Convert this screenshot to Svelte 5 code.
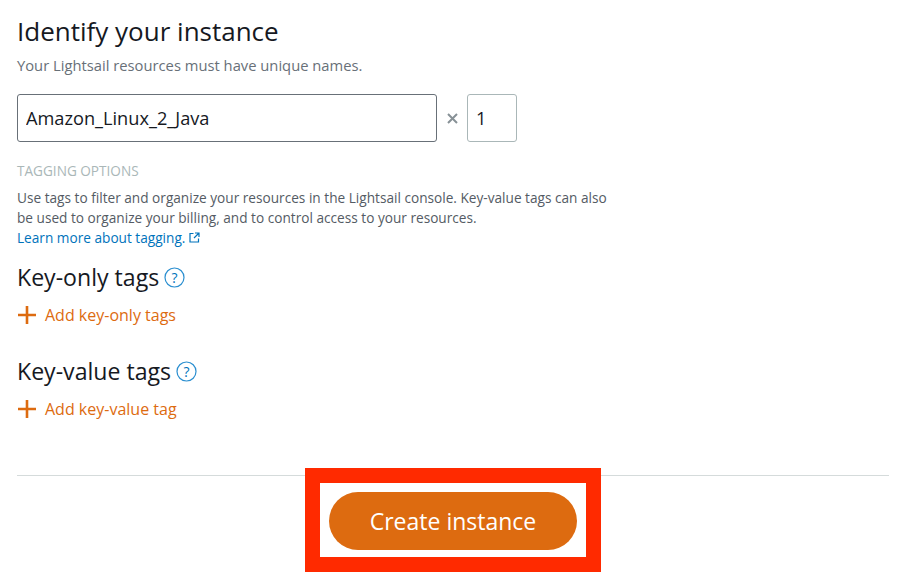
<script>
  let name = $state('Amazon_Linux_2_Java')
  let count = $state('1')
</script>

<main>
  <h2 class="title">Identify your instance</h2>
  <p class="sub">Your Lightsail resources must have unique names.</p>

  <div class="name-row">
    <input class="name" bind:value={name} />
    <span class="times">
      <svg width="11" height="11" viewBox="0 0 11 11" stroke="#879196" stroke-width="2"><path d="M1 1l9 9M10 1l-9 9" /></svg>
    </span>
    <input class="count" bind:value={count} />
  </div>

  <div class="label">TAGGING OPTIONS</div>
  <p class="desc">
    Use tags to filter and organize your resources in the Lightsail console. Key-value tags can also<br />
    be used to organize your billing, and to control access to your resources.<br />
    <a href="#tags">Learn more about tagging.
      <svg width="11" height="11" viewBox="0 0 11 11" fill="none" stroke="#0073bb" stroke-width="1.2">
        <path d="M4.5 1.5H1v8.5h8.5V6.5" />
        <path d="M6 1h4v4M10 1 5 6" />
      </svg>
    </a>
  </p>

  <section class="tags first">
    <h3>Key-only tags
      <svg class="help" width="21" height="21" viewBox="0 0 21 21">
        <circle cx="10.5" cy="10.5" r="9.5" fill="none" stroke="#2b8fd0" stroke-width="1.2" />
        <text x="10.5" y="15.5" text-anchor="middle" font-size="14" fill="#0073bb">?</text>
      </svg>
    </h3>
    <button class="add">
      <svg width="18" height="18" viewBox="0 0 18 18" stroke="#dd6b10" stroke-width="2.6"><path d="M9 0v18M0 9h18" /></svg>
      Add key-only tags
    </button>
  </section>

  <section class="tags">
    <h3>Key-value tags
      <svg class="help" width="21" height="21" viewBox="0 0 21 21">
        <circle cx="10.5" cy="10.5" r="9.5" fill="none" stroke="#2b8fd0" stroke-width="1.2" />
        <text x="10.5" y="15.5" text-anchor="middle" font-size="14" fill="#0073bb">?</text>
      </svg>
    </h3>
    <button class="add">
      <svg width="18" height="18" viewBox="0 0 18 18" stroke="#dd6b10" stroke-width="2.6"><path d="M9 0v18M0 9h18" /></svg>
      Add key-value tag
    </button>
  </section>

  <div class="footer">
    <div class="highlight">
      <button class="create">Create instance</button>
    </div>
  </div>
</main>

<style>
  :global(body) {
    margin: 0;
    background: #fff;
    font-family: "Open Sans", "Liberation Sans", sans-serif;
    color: #16191f;
  }

  main {
    height: 583px;
    padding: 14px 22px 0 17px;
    box-sizing: border-box;
    overflow: hidden;
  }

  .title {
    margin: 0;
    font-size: 26px;
    line-height: 34px;
    font-weight: 400;
  }

  .sub {
    margin: 7px 0 0;
    font-size: 14.75px;
    line-height: 20px;
    color: #687078;
  }

  .name-row {
    display: flex;
    align-items: center;
    margin-top: 19px;
  }

  input {
    box-sizing: border-box;
    height: 48px;
    border: 1px solid #687078;
    font: 18.2px "Open Sans", sans-serif;
    color: #16191f;
    padding: 0 8px;
    outline: none;
  }

  .name {
    width: 420px;
    border-radius: 3px;
  }

  .times {
    width: 30px;
    display: flex;
    justify-content: center;
  }

  .count {
    width: 50px;
    border-radius: 3px;
    border-color: #aab7b8;
  }

  .label {
    margin-top: 20px;
    font-size: 13.6px;
    line-height: 17px;
    color: #aab7b8;
  }

  .desc {
    margin: 9px 0 0;
    font-size: 13.65px;
    line-height: 20px;
    color: #545b64;
  }

  a {
    color: #0073bb;
    text-decoration: none;
  }

  .tags h3 {
    margin: 0;
    font-size: 23.1px;
    line-height: 30px;
    font-weight: 400;
    display: flex;
    align-items: center;
    gap: 5px;
  }

  .tags.first {
    margin-top: 14px;
  }

  .tags {
    margin-top: 29px;
  }

  .add {
    display: flex;
    align-items: center;
    gap: 9px;
    margin-top: 11px;
    padding: 0 0 0 1px;
    border: none;
    background: none;
    color: #dd6b10;
    font: 16px/24px "Open Sans", sans-serif;
  }

  .footer {
    margin-top: 54px;
    border-top: 1px solid #d5dbdb;
    display: flex;
    justify-content: center;
  }

  .highlight {
    margin-top: -8px;
    border: 15px solid #ff2a00;
    padding-top: 2px;
    background: #fff;
    width: 296px;
    height: 104px;
    box-sizing: border-box;
    display: flex;
    align-items: center;
    justify-content: center;
  }

  .create {
    width: 248px;
    height: 58px;
    border: none;
    border-radius: 29px;
    background: #dd6b10;
    color: #fff;
    font: 23px "Open Sans", sans-serif;
  }
</style>
